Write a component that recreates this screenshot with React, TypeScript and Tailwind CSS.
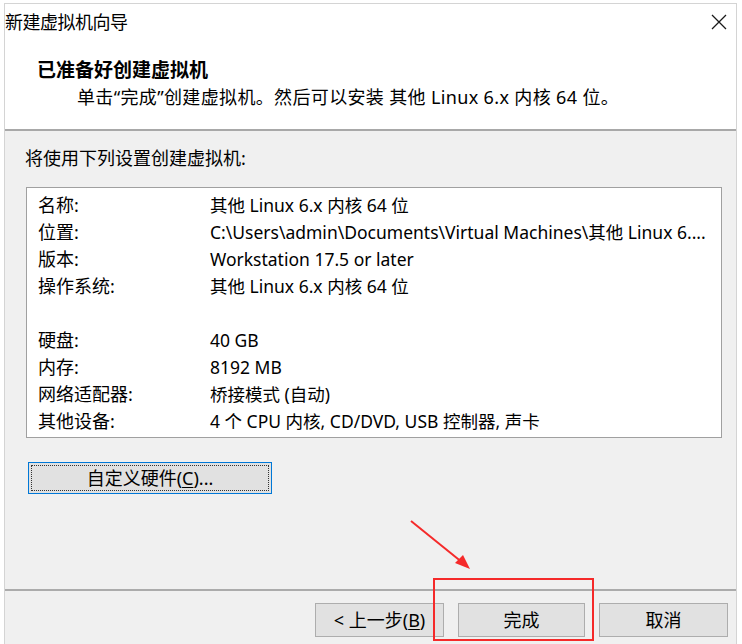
import React from "react";

const FONT = '"Noto Sans", "Noto Sans CJK SC", sans-serif';

const rows: [string, string][] = [
  ["名称:", "其他 Linux 6.x 内核 64 位"],
  ["位置:", "C:\\Users\\admin\\Documents\\Virtual Machines\\其他 Linux 6...."],
  ["版本:", "Workstation 17.5 or later"],
  ["操作系统:", "其他 Linux 6.x 内核 64 位"],
  ["", ""],
  ["硬盘:", "40 GB"],
  ["内存:", "8192 MB"],
  ["网络适配器:", "桥接模式 (自动)"],
  ["其他设备:", "4 个 CPU 内核, CD/DVD, USB 控制器, 声卡"],
];

export default function App() {
  return (
    <div className="relative w-[742px] h-[644px] bg-white overflow-hidden" style={{ fontFamily: FONT }}>
      <div className="ml-[4px] mt-[3px] w-[733px] h-[641px] border border-b-0 border-[#d4d4d4] flex flex-col">
        {/* title + header */}
        <div className="bg-white border-b-2 border-[#a8a8a8]">
          <div className="flex items-center justify-between h-[36px]">
            <span className="text-[18px] leading-[36px] text-black tracking-[-0.5px]">新建虚拟机向导</span>
            <svg width="16" height="16" viewBox="0 0 16 16" className="mr-[9px]">
              <path d="M1 1 L15 15 M15 1 L1 15" stroke="#1a1a1a" strokeWidth="1.3" fill="none" />
            </svg>
          </div>
          <div className="pl-[32px] mt-[17px] text-[19px] font-bold leading-[26px] text-black">已准备好创建虚拟机</div>
          <div className="pl-[72px] mt-[1px] mb-[19px] text-[18px] leading-[26px] text-black tracking-[0.35px]">
            单击“完成”创建虚拟机。然后可以安装 其他 Linux 6.x 内核 64 位。
          </div>
        </div>
        {/* content */}
        <div className="flex-1 bg-[#f0f0f0] flex flex-col">
          <div className="pl-[20px] mt-[14px] text-[18px] leading-[26px] text-black">将使用下列设置创建虚拟机:</div>
          <div className="ml-[21px] mr-[14px] mt-[16px] h-[251px] bg-white border border-[#a0a0a0] pt-[4px] pl-[11px]">
            {rows.map(([k, v], i) => (
              <div key={i} className="flex h-[27px] items-center text-[18px] text-black whitespace-nowrap">
                <span className="w-[172px] shrink-0">{k}</span>
                <span className="text-[17.5px]">{v}</span>
              </div>
            ))}
          </div>
          <div className="ml-[23px] mt-[24px] w-[244px] h-[32px] border border-[#0078d7] bg-[#e1e1e1] p-[2px]">
            <div className="w-full h-full border border-dotted border-[#333] flex items-center justify-center text-[18px] text-black">
              自定义硬件(<span className="underline underline-offset-2">C</span>)...
            </div>
          </div>
          <div className="mt-[95px] border-t-2 border-[#ababab]" />
          <div className="flex justify-end gap-[14px] pr-[8px] mt-[12px]">
            <button className="w-[129px] h-[34px] border border-[#adadad] bg-[#e1e1e1] text-[18px] text-black flex items-center justify-center">
              &lt; 上一步(<span className="underline underline-offset-2">B</span>)
            </button>
            <button className="w-[127px] h-[34px] border border-[#adadad] bg-[#e1e1e1] text-[18px] text-black flex items-center justify-center">
              完成
            </button>
            <button className="w-[129px] h-[34px] border border-[#adadad] bg-[#e1e1e1] text-[18px] text-black flex items-center justify-center">
              取消
            </button>
          </div>
        </div>
      </div>
      {/* annotation overlay */}
      <div className="absolute left-[433px] top-[578px] w-[161px] h-[63px] border-2 border-[#f52a2a]" />
      <svg className="absolute left-0 top-0 pointer-events-none" width="742" height="644">
        <line x1="411" y1="521" x2="463" y2="563" stroke="#f52a2a" strokeWidth="2" />
        <path d="M470 569 L455 563 L463 555 Z" fill="#f52a2a" />
      </svg>
    </div>
  );
}
